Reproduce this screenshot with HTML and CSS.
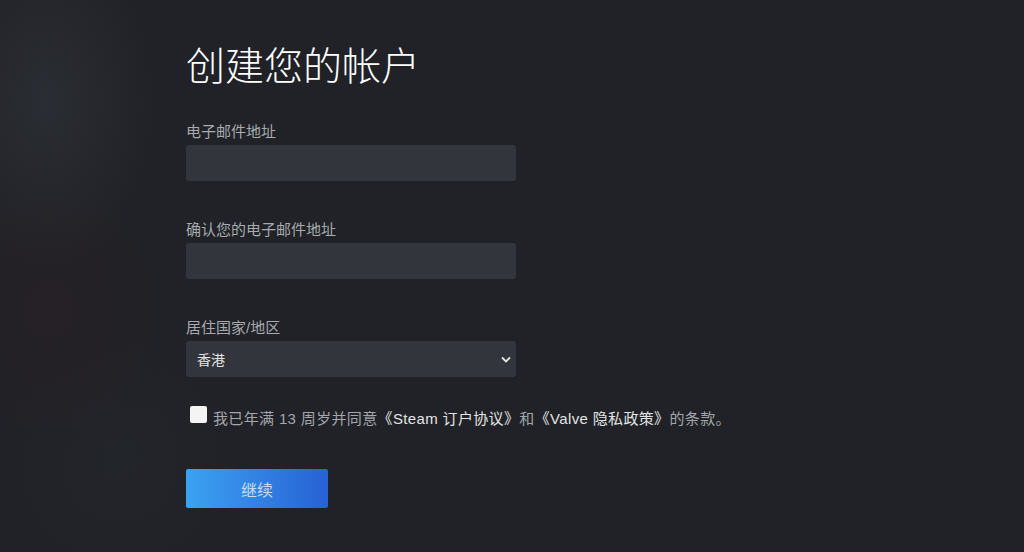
FILE: index.html
```html
<!DOCTYPE html>
<html lang="zh-CN">
<head>
    <meta charset="UTF-8">
    <meta name="viewport" content="width=device-width, initial-scale=1.0">
    <title>创建您的帐户</title>
    <link rel="stylesheet" href="styles.css">
</head>
<body>

<main class="join-page">
    <h1 class="join-title">创建您的帐户</h1>

    <div class="field">
        <label for="email">电子邮件地址</label>
        <input type="email" id="email" class="text-input">
    </div>

    <div class="field">
        <label for="emailConfirm">确认您的电子邮件地址</label>
        <input type="email" id="emailConfirm" class="text-input">
    </div>

    <div class="field field-last">
        <label for="country">居住国家/地区</label>
        <div class="select-wrap">
            <select id="country" class="text-input select-input">
                <option>香港</option>
                <option>中国大陆</option>
                <option>台湾</option>
            </select>
            <svg class="select-arrow" width="10" height="7" viewBox="0 0 10 7">
                <path d="M1 1.5 L5 5.5 L9 1.5" fill="none" stroke="#e6e6e6" stroke-width="1.8"/>
            </svg>
        </div>
    </div>

    <div class="agree-row">
        <input type="checkbox" id="agree" class="agree-box">
        <label for="agree" class="agree-text">我已年满 13 周岁并同意<a href="#">《Steam 订户协议》</a>和<a href="#">《Valve 隐私政策》</a>的条款。</label>
    </div>

    <button class="continue-btn" id="continueBtn">继续</button>
</main>

</body>
</html>
```

FILE: styles.css
```css
html, body {
    height: 100%;
}
body {
    margin: 0;
    font-family: "Liberation Sans", Arial, "Noto Sans CJK SC", sans-serif;
    color: #a3a6ab;
    background:
        radial-gradient(ellipse 110px 170px at 45px 100px, rgba(62, 66, 74, 0.35), transparent),
        radial-gradient(ellipse 130px 150px at 50px 310px, rgba(48, 30, 34, 0.35), transparent),
        radial-gradient(ellipse 120px 120px at 120px 460px, rgba(40, 44, 52, 0.3), transparent),
        #202227;
    overflow: hidden;
}
.join-page {
    padding: 40px 0 0 186px;
    width: 600px;
}
.join-title {
    margin: 0 0 36px;
    font-family: "Noto Sans CJK SC", sans-serif;
    font-size: 39px;
    line-height: 46px;
    font-weight: 300;
    color: #ffffff;
}
.field {
    margin-bottom: 39px;
}
.field-last {
    margin-bottom: 0;
}
.field label {
    display: block;
    font-size: 15px;
    line-height: 20px;
    margin-bottom: 3px;
    color: #a7aaae;
}
.text-input {
    display: block;
    width: 330px;
    height: 36px;
    box-sizing: border-box;
    border: none;
    border-radius: 3px;
    background-color: #32353c;
    color: #ffffff;
    font-size: 15px;
    padding: 0 11px;
    outline: none;
}
.select-wrap {
    position: relative;
    width: 330px;
}
.select-input {
    -webkit-appearance: none;
    appearance: none;
    font-family: "Noto Sans CJK SC", sans-serif;
    font-size: 14px;
    color: #e6e6e6;
    cursor: pointer;
}
.select-arrow {
    position: absolute;
    right: 5px;
    top: 15px;
    pointer-events: none;
}
.agree-row {
    display: flex;
    align-items: flex-start;
    margin-top: 28px;
}
.agree-box {
    -webkit-appearance: none;
    appearance: none;
    flex-shrink: 0;
    width: 17px;
    height: 17px;
    margin: 1px 6px 0 4px;
    background: #f4f4f4;
    border-radius: 2px;
    cursor: pointer;
}
.agree-text {
    padding-top: 4px;
    font-size: 15px;
    line-height: 20px;
    letter-spacing: 0.35px;
    color: #a3a6ab;
}
.agree-text a {
    color: #e4e4e4;
    text-decoration: none;
}
.continue-btn {
    display: block;
    margin-top: 40px;
    width: 142px;
    height: 39px;
    border: none;
    border-radius: 2px;
    background: linear-gradient(to right, #3ba3f2, #2761d4);
    color: #c6dcf4;
    font-family: "Noto Sans CJK SC", sans-serif;
    font-size: 16px;
    cursor: pointer;
}
.continue-btn:hover {
    background: linear-gradient(to right, #4ab0ff, #2f6ce0);
}
```
